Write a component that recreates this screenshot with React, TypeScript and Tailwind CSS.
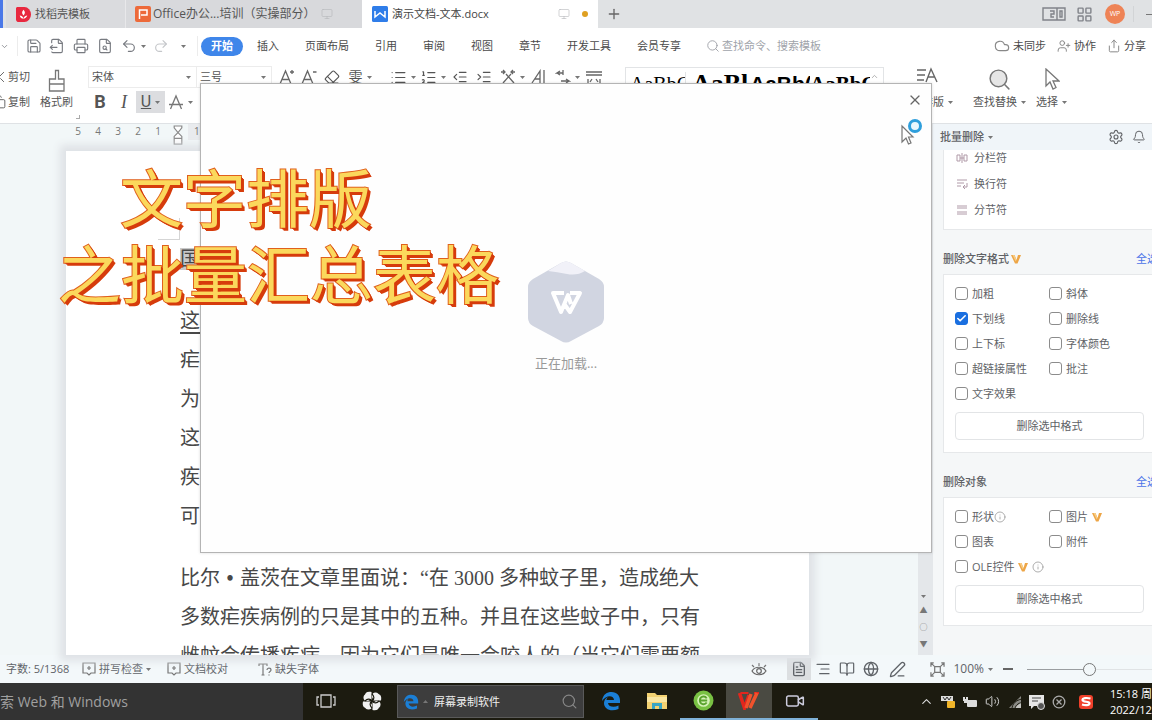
import type { ReactNode } from "react";
import {
  Bell, BookOpen, Check, ChevronDown, ChevronUp, Cloud, Copy, Eraser, FileOutput, FileSearch, FileText, Globe,
  IndentDecrease, IndentIncrease, Info, LayoutGrid, List, ListOrdered, Monitor, PenLine, Plus, Printer, Redo2,
  Save, Scissors, Search, Settings, Share, TextAlignEnd, Undo2, UserPlus, Video, Volume2, X,
} from "lucide-react";

const line = { size: 16, strokeWidth: 1.7 };

function Caret() {
  return (
    <svg viewBox="0 0 5 3" className="h-[3px] w-[5px] shrink-0" fill="#777">
      <path d="M0 0h5L2.500 3z" />
    </svg>
  );
}

function Tool({ label, width, children, caret }: { label: string; width: string; children: ReactNode; caret?: boolean }) {
  return (
    <button aria-label={label} className={`flex h-[22px] shrink-0 items-center justify-center gap-1 ${width}`}>
      {children}
      {caret && <Caret />}
    </button>
  );
}

function VipMark() {
  return (
    <svg viewBox="0 0 10 10" className="size-[10px] shrink-0">
      <path d="M0 1h3.500l2 5 1.500-5H10L6.500 9.500H4z" fill="#eda546" />
      <path d="M3.500 1l2 5-.8 1.500L1.500 1z" fill="#f8cd84" />
    </svg>
  );
}

function TitleBar() {
  return (
    <header className="flex h-7 shrink-0 items-stretch bg-[#e0e2e4] text-[#555]">
      <div className="w-[3px] bg-[#4a78e8]" />
      <nav className="flex flex-1 items-stretch">
        <button className="ml-[3px] flex w-[119px] items-center gap-1 bg-[#dadbde] pl-2.5">
          <svg viewBox="0 0 16 16" className="size-[15px]">
            <path d="M1 0h8a7 8 0 0 1 0 16H3a3 3 0 0 1-3-3V1z" fill="#e8283f" />
            <path d="M4 9c2 0 3 1 4 3 1-2 2-3 4-3-1 4-7 5-8 0zM8 3c2 2 2 4 0 6-2-2-2-4 0-6z" fill="#fff" />
          </svg>
          找稻壳模板
        </button>
        <button className="flex w-[237px] items-center gap-0.5 border-l border-[#e8e8ea] bg-[#d8d9dc] pl-[9px] text-left">
          <svg viewBox="0 0 16 16" className="size-4 shrink-0">
            <rect width="16" height="16" rx="2" fill="#ed6a3a" />
            <path d="M4.500 13V4h7.500v5H6" fill="none" stroke="#fff" strokeWidth="1.500" />
          </svg>
          <span className="w-[166px] text-[12px] whitespace-nowrap">Office办公...培训（实操部分）</span>
          <Monitor size={12} strokeWidth={1.2} color="#b5b7ba" />
        </button>
        <button className="flex w-[236px] items-center gap-1 bg-white pl-2.5 text-left text-[#444]">
          <svg viewBox="0 0 16 16" className="size-4 shrink-0">
            <rect width="16" height="16" rx="1.500" fill="#2f7de9" />
            <path d="M3 5v6l5-4 5 4V5" fill="none" stroke="#fff" strokeWidth="1.500" />
          </svg>
          <span className="w-[162px]">演示文档-文本.docx</span>
          <Monitor size={12} strokeWidth={1.2} color="#b5b7ba" />
          <span className="ml-2 size-1.5 rounded-full bg-[#dfa022]" />
        </button>
        <button aria-label="新建标签" className="ml-2"><Plus size={16} strokeWidth={2} color="#666" /></button>
      </nav>
      <div className="flex items-center">
        <button aria-label="阅读模式" className="mr-2.5">
          <svg viewBox="0 0 24 14" className="h-3.5 w-6" fill="none" stroke="#808389" strokeWidth="1.400">
            <path d="M1 1h14v12H1zM15 1h8v12h-8zM8 4h4v3H9v3h3M18 4v6h2V4z" />
          </svg>
        </button>
        <button aria-label="应用"><LayoutGrid size={17} strokeWidth={2} color="#808389" /></button>
        <span className="ml-3 flex size-5 items-center justify-center rounded-full bg-[#ee8356] text-[7px] text-white">WP</span>
        <span className="ml-2 h-4 w-px bg-[#d2d4d6]" />
        <button aria-label="最小化" className="ml-3 h-px w-1.5 bg-[#777]" />
      </div>
    </header>
  );
}

const menuTabs = ["插入", "页面布局", "引用", "审阅", "视图", "章节", "开发工具", "会员专享"];

function MenuBar() {
  return (
    <div className="flex h-9 shrink-0 items-center bg-white text-[#4a4a4a]">
      <div className="flex w-[201px] shrink-0 items-center text-[#777a80]">
        <ChevronDown size={9} />
        <span className="mr-1 ml-2 h-5 w-px bg-[#ececec]" />
        <Tool label="保存" width="w-[23px]"><Save {...line} /></Tool>
        <Tool label="输出" width="w-6"><FileOutput {...line} /></Tool>
        <Tool label="打印" width="w-6"><Printer {...line} /></Tool>
        <Tool label="打印预览" width="w-6"><FileSearch {...line} /></Tool>
        <Tool label="撤销" width="w-8" caret><Undo2 {...line} /></Tool>
        <Tool label="重做" width="w-6"><Redo2 {...line} color="#c4c6c9" /></Tool>
        <Tool label="更多" width="w-5"><Caret /></Tool>
        <span className="ml-1 h-5 w-px bg-[#ececec]" />
      </div>
      <button className="h-[19px] w-[42px] rounded-full bg-[#3f86ea] font-bold text-white">开始</button>
      <nav className="ml-3.5 flex gap-[26px] whitespace-nowrap">
        {menuTabs.map((t) => <button key={t}>{t}</button>)}
      </nav>
      <label className="ml-[25px] flex items-center gap-0.5">
        <Search size={14} strokeWidth={1.5} color="#9a9da3" />
        <input aria-label="搜索" placeholder="查找命令、搜索模板" className="w-[120px] bg-transparent outline-none placeholder:text-[#a0a3aa]" />
      </label>
      <div className="ml-auto flex items-center gap-[3px] pr-1.5 whitespace-nowrap">
        <button className="flex items-center gap-[3px]"><Cloud {...line} color="#888" />未同步</button>
        <button className="ml-2 flex items-center gap-[3px]"><UserPlus {...line} size={14} color="#888" />协作</button>
        <button className="ml-2 flex items-center gap-[3px]"><Share {...line} size={14} color="#888" />分享</button>
      </div>
    </div>
  );
}

function BigTool({ label, icon, caret }: { label: string; icon: ReactNode; caret?: boolean }) {
  return (
    <button className="flex shrink-0 flex-col items-center gap-px">
      <span className="flex h-[26px] items-center">{icon}</span>
      <span className="flex h-[18px] items-center gap-1 whitespace-nowrap">{label}{caret && <Caret />}</span>
    </button>
  );
}

function Ribbon() {
  return (
    <div className="flex h-[60px] shrink-0 overflow-hidden border-b border-[#dfe2e5] bg-white pt-0.5 text-[#555]">
      <div className="-ml-2 flex w-[46px] shrink-0 flex-col gap-[3px]">
        <button className="flex h-[22px] items-center gap-0.5 whitespace-nowrap"><Scissors size={14} strokeWidth={1.5} />剪切</button>
        <button className="flex h-[22px] items-center gap-0.5 whitespace-nowrap"><Copy size={14} strokeWidth={1.5} />复制</button>
      </div>
      <div className="relative w-[50px] shrink-0 pl-0.5">
        <BigTool label="格式刷" icon={
          <svg viewBox="0 0 20 24" className="mt-1 h-6 w-5" fill="none" stroke="#777" strokeWidth="1.300">
            <path d="M8.500 1.500h3V10h5.500v12H2.500V10h6zM2.500 15h14.500" />
          </svg>
        } />
        <span className="absolute right-2 bottom-1 size-1 border-r border-b border-[#aaa]" />
      </div>
      <div className="flex shrink-0 flex-col gap-[3px]">
        <div className="flex items-center">
          <div className="flex h-[22px] w-[109px] items-center border border-[#ececec] pr-[5px]">
            <select aria-label="字体" className="w-full appearance-none bg-transparent pl-[3px] outline-none"><option>宋体</option></select>
            <Caret />
          </div>
          <div className="flex h-[22px] w-[75px] items-center border border-l-0 border-[#ececec] pr-[5px]">
            <select aria-label="字号" className="w-full appearance-none bg-transparent pl-[3px] outline-none"><option>三号</option></select>
            <Caret />
          </div>
          <div className="flex pl-1">
            <Tool label="增大字号" width="w-[22px]">
              <svg viewBox="0 0 16 16" className="size-4" fill="none" stroke="#666" strokeWidth="1.300"><path d="M1 15L6.500 2 12 15M3 10.500h7M11 3h4M13 1v4" /></svg>
            </Tool>
            <Tool label="减小字号" width="w-[22px]">
              <svg viewBox="0 0 16 16" className="size-4" fill="none" stroke="#666" strokeWidth="1.300"><path d="M1 15L6.500 2 12 15M3 10.500h7M12 3h3.500" /></svg>
            </Tool>
            <Tool label="清除格式" width="w-6"><Eraser {...line} /></Tool>
            <Tool label="拼音指南" width="w-8" caret><span className="text-[14px]">雯</span></Tool>
            <Tool label="项目符号" width="w-[30px] ml-3" caret><List {...line} size={17} /></Tool>
            <Tool label="编号" width="w-[30px]" caret><ListOrdered {...line} size={17} /></Tool>
            <Tool label="减少缩进" width="w-6"><IndentDecrease {...line} /></Tool>
            <Tool label="增加缩进" width="w-6"><IndentIncrease {...line} /></Tool>
            <Tool label="中文版式" width="w-8" caret>
              <svg viewBox="0 0 16 16" className="size-4" fill="none" stroke="#666" strokeWidth="1.300">
                <path d="M1 3h4M3 1l2 2-2 2M15 3h-4M13 1l-2 2 2 2M3 14L11 5M6 5l8 9" />
              </svg>
            </Tool>
            <Tool label="文字方向" width="w-[22px]">
              <svg viewBox="0 0 16 16" className="size-4" fill="none" stroke="#666" strokeWidth="1.300"><path d="M1 14L9 2v12M4 10h5M13 1v14" /></svg>
            </Tool>
            <Tool label="制表位" width="w-[30px] ml-0.5" caret>
              <svg viewBox="0 0 16 16" className="size-4" fill="none" stroke="#666" strokeWidth="1.300"><path d="M8 4H2l3-2M2 4l3 2M8 1v5M6 12h8l-3-2M14 12l-3 2" /></svg>
            </Tool>
            <Tool label="行距" width="w-6">
              <svg viewBox="0 0 18 16" className="h-4 w-[18px]" fill="none" stroke="#666" strokeWidth="1.300"><path d="M1 3h16M1 6h16M3 10v5M15 10v5M7 10l-2 3M11 10l2 3" /></svg>
            </Tool>
          </div>
        </div>
        <div className="flex items-center">
          <Tool label="加粗" width="w-6"><span className="font-[Roboto] text-[18px] font-bold">B</span></Tool>
          <Tool label="倾斜" width="w-6"><span className="font-['Liberation_Serif'] text-[18px] italic">I</span></Tool>
          <Tool label="下划线" width="w-[29px] bg-[#dcdde0]" caret><span className="font-[Roboto] text-[16px] underline">U</span></Tool>
          <Tool label="删除线" width="w-[31px]" caret>
            <svg viewBox="0 0 16 16" className="size-4" fill="none" stroke="#777" strokeWidth="1.300"><path d="M2.500 15L8 2l5.500 13M1 10.500h14" /></svg>
          </Tool>
        </div>
      </div>
      <div className="mt-px ml-[19px] flex h-9 shrink-0 items-start border border-[#e2e4e6] pt-1 text-black">
        <span className="h-8 w-[60px] overflow-hidden border-r border-[#e2e4e6] pl-1 font-['Liberation_Serif'] text-[20px] leading-6">AaBbC</span>
        <span className="h-8 w-16 overflow-hidden pl-1.5 font-['Liberation_Serif'] text-[26px] leading-6 font-bold">AaBl</span>
        <span className="h-8 w-[60px] overflow-hidden font-['Liberation_Sans'] text-[21px] leading-6 font-bold">AaBb(</span>
        <span className="h-8 w-[60px] overflow-hidden font-['Liberation_Serif'] text-[21px] leading-6 font-bold">AaBbC</span>
        <ChevronUp size={9} color="#999" className="mr-1" />
      </div>
      <div className="ml-auto flex pr-[85px]">
        <BigTool label="文字排版" caret icon={
          <svg viewBox="0 0 22 20" className="mb-1 h-5 w-[22px]" fill="none" stroke="#666" strokeWidth="1.400">
            <path d="M1 3h9M1 8h8M1 13h7M10 15L15 2l6 13M12 10h7" />
          </svg>
        } />
        <div className="w-5" />
        <BigTool label="查找替换" caret icon={<Search size={25} strokeWidth={1.4} fill="#e6e6e6" color="#777" />} />
        <div className="w-2.5" />
        <BigTool label="选择" caret icon={
          <svg viewBox="0 0 16 22" className="h-[22px] w-4" fill="#fff" stroke="#777" strokeWidth="1.300"><path d="M2 1v17l4-4 3 7 3-1.500-3-6.500h6z" /></svg>
        } />
      </div>
    </div>
  );
}

function Ruler() {
  return (
    <div className="flex h-[27px] shrink-0 pl-[68px] text-[10px] leading-[15px] text-[#777]">
      {["5", "4", "3", "2", "1"].map((n) => <span key={n} className="w-5 text-center">{n}</span>)}
      <svg viewBox="0 0 12 22" className="mt-px h-[21px] w-5" fill="#fff" stroke="#888" strokeWidth="1.200">
        <path d="M2 1h8v2L6 8 2 3zM6 8l4 4v8H2v-8zM2 14h8" />
      </svg>
      <span className="h-4 flex-1 bg-[#e9ebee] pl-1.5">1</span>
    </div>
  );
}

const openingLines = ["疟", "为", "这", "疾", "可"];

function Editor() {
  return (
    <main className="flex min-w-0 flex-1 bg-[#f2f7f8]">
      <div className="flex min-w-0 flex-1 flex-col">
        <Ruler />
        <article className="relative mr-[109px] ml-[66px] flex-1 overflow-hidden bg-white pt-[89px] pl-[114px] font-['Liberation_Serif','Noto_Sans_CJK_SC',serif] text-[20px] leading-[39px] whitespace-nowrap text-[#484848] shadow-[0_0_8px_6px_#dfe2e6]">
          <span className="absolute top-[67px] left-[92px] size-[22px] border-r border-b border-[#d5d5d5]" />
          <div className="flex flex-col gap-[23px]">
            <h1><span className="bg-[#c9c9c9]">国</span></h1>
            <div>
              <p><u className="underline-offset-4">这</u></p>
              {openingLines.map((t) => <p key={t}>{t}</p>)}
            </div>
            <div>
              <p>比尔<span className="inline-block w-5 text-center font-bold">•</span>盖茨在文章里面说：“在 3000 多种蚊子里，造成绝大</p>
              <p>多数疟疾病例的只是其中的五种。并且在这些蚊子中，只有</p>
              <p>雌蚊会传播疾病，因为它们是唯一会咬人的（当它们需要额</p>
            </div>
          </div>
        </article>
      </div>
      <div className="flex w-[15px] flex-col items-center justify-end gap-[7px] bg-[#e4e7ea] pr-1 pb-1.5 text-[8px] leading-[10px] text-[#777]">
        <Caret />
        <span>▲</span>
        <span>○</span>
        <span>▼</span>
      </div>
    </main>
  );
}

type Option = { text: string; checked?: boolean; vip?: boolean; info?: boolean };

const formatOptions: Option[] = [
  { text: "加粗" }, { text: "斜体" },
  { text: "下划线", checked: true }, { text: "删除线" },
  { text: "上下标" }, { text: "字体颜色" },
  { text: "超链接属性" }, { text: "批注" },
  { text: "文字效果" },
];

const objectOptions: Option[] = [
  { text: "形状", info: true }, { text: "图片", vip: true },
  { text: "图表" }, { text: "附件" },
  { text: "OLE控件", vip: true, info: true },
];

function OptionCard({ title, vip, options }: { title: string; vip?: boolean; options: Option[] }) {
  return (
    <section>
      <div className="flex h-11 items-center gap-0.5 pt-3.5">
        <h2 className="font-medium">{title}</h2>
        {vip && <VipMark />}
        <button className="-mr-0.5 ml-auto text-[#4a73e8]">全选</button>
      </div>
      <div className="border border-[#e6e8ea] bg-white px-[11px] pt-1.5 pb-3">
        <div className="grid grid-cols-[94px_1fr]">
          {options.map((o) => (
            <label key={o.text} className="flex h-[25px] items-center gap-1 whitespace-nowrap">
              <span className="relative size-[13px] shrink-0">
                <input type="checkbox" defaultChecked={o.checked} className="peer block size-[13px] appearance-none rounded-[3px] border border-[#8c8c8c] bg-white checked:border-[#1a6fe0] checked:bg-[#1a6fe0]" />
                <Check size={11} strokeWidth={3.5} color="#fff" className="pointer-events-none absolute top-px left-px hidden peer-checked:block" />
              </span>
              {o.text}
              {o.vip && <VipMark />}
              {o.info && <Info size={12} strokeWidth={1.6} color="#999" className={o.vip ? "" : "-ml-1"} />}
            </label>
          ))}
        </div>
        <button className="mt-1.5 h-7 w-full rounded-sm border border-[#e2e4e6] bg-white">删除选中格式</button>
      </div>
    </section>
  );
}

const breakRows = [
  { text: "分栏符", d: "M1 3h3v6H1zM8 3h3v6H8zM6 1v10M4 6h4" },
  { text: "换行符", d: "M1 2h10M1 5h7M1 8h4M11 5v4H7M9 7L7 9l2 2" },
  { text: "分节符", d: "M1 2h10M1 4h10M1 8h10M1 10h10" },
];

function SidePanel() {
  return (
    <aside className="flex w-[219px] shrink-0 flex-col overflow-hidden bg-[#f5f7f8] text-[#606266]">
      <div className="flex h-[26px] shrink-0 items-center bg-[#f0f5f9] pr-1.5 pl-[7px]">
        <button className="flex items-center gap-1 font-medium">批量删除 <Caret /></button>
        <button aria-label="设置" className="ml-auto"><Settings size={16} strokeWidth={1.7} /></button>
        <button aria-label="通知" className="ml-2"><Bell size={14} strokeWidth={1.7} /></button>
      </div>
      <div className="-mr-1 flex-1 overflow-hidden pl-2.5">
        <ul className="-mt-1.5 border border-[#e6e8ea] bg-white pb-1.5 pl-3">
          {breakRows.map((r) => (
            <li key={r.text} className="flex h-[26px] items-center gap-1.5">
              <svg viewBox="0 0 12 12" className="size-3" fill="none" stroke="#b09aa8"><path d={r.d} /></svg>
              {r.text}
            </li>
          ))}
        </ul>
        <OptionCard title="删除文字格式" vip options={formatOptions} />
        <OptionCard title="删除对象" options={objectOptions} />
      </div>
    </aside>
  );
}

function BadgeIcon() {
  return (
    <svg viewBox="0 0 14 14" className="size-3.5" fill="none" stroke="#777" strokeWidth="1.200">
      <path d="M1 1h12v10H9l-2 2-2-2H1z" /><path d="M7 4v4M5 6h4" />
    </svg>
  );
}

function StatusBar() {
  return (
    <footer className="flex h-7 shrink-0 items-center bg-[#f3f8fa] pl-1.5 whitespace-nowrap text-[#5f6368]">
      <span className="w-[76px]">字数: 5/1368</span>
      <button className="flex w-[85px] items-center gap-[3px]"><BadgeIcon />拼写检查 <Caret /></button>
      <button className="flex w-[91px] items-center gap-[3px]"><BadgeIcon />文档校对</button>
      <button className="flex items-center gap-0.5">
        <svg viewBox="0 0 15 13" className="h-[13px] w-[15px]" fill="none" stroke="#777" strokeWidth="1.200">
          <path d="M1 3V1h8v2M5 1v11M3.500 12h3M9 7c0-2.500 4-2.500 4 0 0 1.500-2 1.500-2 3M11 11.500v1" />
        </svg>
        缺失字体
      </button>
      <div className="ml-auto flex items-center">
        <Tool label="护眼模式" width="w-8 mr-3">
          <svg viewBox="0 0 16 16" className="size-4" fill="none" stroke="#666" strokeWidth="1.200">
            <path d="M1 10c3-5 11-5 14 0-3 5-11 5-14 0zM3 6L1 4M8 5V2M13 6l2-2" /><circle cx="8" cy="10" r="2.300" />
          </svg>
        </Tool>
        <Tool label="页面视图" width="w-6 bg-[#dcdfe1]"><FileText size={16} strokeWidth={2} /></Tool>
        <Tool label="大纲" width="w-6"><TextAlignEnd size={16} strokeWidth={1.8} /></Tool>
        <Tool label="阅读版式" width="w-6"><BookOpen size={16} strokeWidth={1.8} /></Tool>
        <Tool label="Web版式" width="w-6"><Globe size={16} strokeWidth={2} /></Tool>
        <Tool label="写作模式" width="w-7"><PenLine size={17} strokeWidth={1.8} /></Tool>
        <Tool label="适应页面" width="w-6 ml-3.5">
          <svg viewBox="0 0 16 16" className="size-[15px]" fill="none" stroke="#777" strokeWidth="1.300">
            <path d="M5 5h6v6H5zM1 5V1h3M1 1l4 4M12 1h3v4M15 1l-4 4M1 11v4h3M1 15l4-4M12 15h3v-4M15 15l-4-4" />
          </svg>
        </Tool>
        <button className="ml-1 flex items-center gap-1 text-[12px]">100% <Caret /></button>
        <button aria-label="缩小" className="mx-2.5 h-0.5 w-2.5 bg-[#666]" />
        <input
          type="range" aria-label="缩放" min={0} max={100} defaultValue={50}
          className="ml-1 h-3 w-[125px] appearance-none bg-[linear-gradient(90deg,#9a9da0_50%,#e0e3e5_50%)] bg-[length:100%_1px] bg-center bg-no-repeat [&::-webkit-slider-thumb]:size-[13px] [&::-webkit-slider-thumb]:appearance-none [&::-webkit-slider-thumb]:rounded-full [&::-webkit-slider-thumb]:border [&::-webkit-slider-thumb]:border-[#777] [&::-webkit-slider-thumb]:bg-[#f3f8fa]"
        />
      </div>
    </footer>
  );
}

function TaskButton({ label, active, open, children }: { label: string; active?: boolean; open?: boolean; children: ReactNode }) {
  return (
    <button
      aria-label={label}
      className={`flex w-[46px] items-center justify-center border-b-2 ${active ? "bg-[#4a4a42]" : ""} ${open ? "border-[#7fb2d8]" : "border-transparent"}`}
    >
      {children}
    </button>
  );
}

function EdgeE({ size }: { size: string }) {
  return (
    <svg viewBox="0 0 20 20" className={size}>
      <path d="M1 10C2 3 6 1 10.500 1 16 1 19 5 19 9.500V12H7c.5 4 6 5 10.500 2.500V18C10 21 3 18.500 3 12c0-3 2-5 4-6-1 1-1.500 2-1.600 3H13c0-5-8-5.500-12 1z" fill="#1b7fd6" />
    </svg>
  );
}

function Taskbar() {
  return (
    <div className="flex h-[37px] shrink-0 items-stretch overflow-hidden bg-[#1c1b10] text-[#ddd]">
      <button className="flex w-[303px] shrink-0 items-center bg-[#333333] text-left text-[14px] whitespace-nowrap text-[#a0a0a0]">
        <span className="-ml-3.5">搜索 Web 和 Windows</span>
      </button>
      <TaskButton label="任务视图">
        <svg viewBox="0 0 20 14" className="h-3.5 w-5" fill="none" stroke="#ccc" strokeWidth="1.300"><path d="M5 1h10v12H5zM3 3H1v8h2M17 3h2v8h-2" /></svg>
      </TaskButton>
      <TaskButton label="小程序">
        <svg viewBox="0 0 20 20" className="size-5" fill="#f1f1f1">
          <path d="M9.500 9V1C5 0 3 2 3 4.500zM11 9.500h8c1-4.500-1-6.500-3.500-6.500zM10.500 11v8c4.500 1 6.500-1 6.500-3.500zM9 10.500H1c-1 4.500 1 6.500 3.500 6.500z" />
          <circle cx="5" cy="6.500" r="3.500" /><circle cx="13.500" cy="5" r="3.500" /><circle cx="15" cy="13.500" r="3.500" /><circle cx="6.500" cy="15" r="3.500" />
          <path d="M10 10c-2-3-5-2-7 0M10 10c3-2 2-5 0-7M10 10c2 3 5 2 7 0M10 10c-3 2-2 5 0 7" stroke="#1c1b10" strokeWidth="1.200" fill="none" />
        </svg>
      </TaskButton>
      <div className="my-0.5 ml-0.5 flex w-[187px] items-center border border-[#5a5a5a] bg-[#3d3d3d] px-[5px]">
        <EdgeE size="size-4" />
        <span className="mx-1 rotate-180"><Caret /></span>
        <input aria-label="网页搜索" defaultValue="屏幕录制软件" className="ml-0.5 w-0 flex-1 bg-transparent text-[#eee] outline-none" />
        <Search size={17} strokeWidth={1.6} color="#888" />
      </div>
      <div className="ml-1 flex">
        <TaskButton label="Edge"><EdgeE size="size-5" /></TaskButton>
        <TaskButton label="文件资源管理器">
          <svg viewBox="0 0 22 18" className="h-[18px] w-[22px]">
            <path d="M1 1h8l2 2h10v14H1z" fill="#f3d272" /><path d="M1 5h20v5H1z" fill="#fbe7a2" /><path d="M6 17v-6h10v6h-3v-3H9v3z" fill="#3aa6c4" />
          </svg>
        </TaskButton>
        <TaskButton label="浏览器" open>
          <svg viewBox="0 0 20 20" className="size-[21px]">
            <circle cx="10" cy="10" r="9.500" fill="#79c143" /><circle cx="10" cy="10" r="6" fill="#d6f2b8" /><path d="M6.500 10h7M13 8c-2-3.500-6.500-1.500-6.500 2s4.500 5 6.500 2" fill="none" stroke="#5aa32e" strokeWidth="1.800" />
          </svg>
        </TaskButton>
        <TaskButton label="WPS" active open>
          <svg viewBox="0 0 22 18" className="h-[18px] w-[22px]" fill="none" strokeWidth="3.500">
            <path d="M1.500 1l5 15L11 3" stroke="#e3261d" /><path d="M10.500 1h-8M21 1h-5" stroke="#e3261d" strokeWidth="2" /><path d="M8 16l5-14M12 16l7-15" stroke="#f0522c" />
          </svg>
        </TaskButton>
        <TaskButton label="录屏" open><Video size={20} strokeWidth={1.8} color="#ccd" /></TaskButton>
      </div>
      <div className="ml-auto flex shrink-0 items-center">
        <Tool label="显示隐藏的图标" width="w-[22px]"><ChevronUp size={15} strokeWidth={1.8} /></Tool>
        <Tool label="安全" width="w-[22px]">
          <svg viewBox="0 0 16 14" className="h-3.5 w-4"><path d="M1 1h12v5H1z" fill="#ddd" /><path d="M3 2l2 3 2-3 2 3 2-3" stroke="#333" fill="none" /><rect x="7" y="6" width="8" height="7" rx="1" fill="#f0b429" /></svg>
        </Tool>
        <Tool label="电源" width="w-[22px]">
          <svg viewBox="0 0 16 12" className="h-3 w-4" fill="#ddd"><path d="M1 1h2v2h1V1h2v4H5v2H2V5H1z" /><rect x="5" y="4" width="10" height="7" rx="1" /></svg>
        </Tool>
        <Tool label="音量" width="w-[22px]"><Volume2 size={15} strokeWidth={1.5} /></Tool>
        <Tool label="网络" width="w-[23px]">
          <svg viewBox="0 0 14 14" className="size-3.5" fill="#8a8a84"><path d="M1 13L13 1v12z" /><path d="M7 13l6-6v6z" fill="#c4c4c0" /><path d="M4 14C4 9 8 5 14 4M7 14c0-3 3-6 7-6.500" fill="none" stroke="#1c1b10" /></svg>
        </Tool>
        <Tool label="通知" width="w-[22px]">
          <svg viewBox="0 0 16 16" className="size-4"><path d="M0 1h15v11H5l-3 3v-3H0z" fill="#e6e6e6" /><path d="M3 4h9M3 7h6" stroke="#444" /><circle cx="12" cy="12" r="3.500" fill="#555" stroke="#ddd" /></svg>
        </Tool>
        <Tool label="状态" width="w-[22px]">
          <svg viewBox="0 0 14 14" className="size-3.5" fill="none" stroke="#aaa" strokeWidth="1.300"><circle cx="7" cy="7" r="5.800" /><path d="M4.500 4.500l5 5M9.500 4.500l-5 5" /></svg>
        </Tool>
        <Tool label="输入法" width="w-8">
          <svg viewBox="0 0 16 16" className="size-4"><rect x="1" y="1" width="14" height="14" rx="3" fill="#f0402a" /><path d="M12.500 4.500c-4-1-8-.5-8 1.500 0 2.500 7.500 1 7 3.500-.3 2-4.500 2-7.500 1" fill="none" stroke="#fff" strokeWidth="2.200" /></svg>
        </Tool>
        <time className="ml-2 w-[42px] overflow-hidden text-[11px] leading-[16px] whitespace-nowrap text-white">15:18 周<br />2022/12/</time>
      </div>
    </div>
  );
}

function LoadingDialog() {
  return (
    <div role="dialog" aria-label="正在加载" className="absolute top-[83px] right-[220px] left-[200px] flex h-[470px] flex-col items-center border border-[#b4b4b4] bg-[#fefefe] shadow-[0_0_3px_#0002]">
      <div className="flex w-full justify-end pt-2 pr-2">
        <button aria-label="关闭"><X size={16} strokeWidth={1.8} color="#666" /></button>
      </div>
      <svg viewBox="0 0 76 82" className="mt-[153px] h-[82px] w-[76px]">
        <path d="M33 2q5-3 10 0l28 16q5 3 5 8v31q0 5-5 8L43 80q-5 3-10 0L5 65q-5-3-5-8V26q0-5 5-8z" fill="#d1d5e1" />
        <path d="M20 10L33 2q5-3 10 0l14 8q-8 5-18 3t-19-3z" fill="#f1f1f8" />
        <path d="M36 32H25l8 19 7-17 3 9M37 44l5 7 10-19H42" fill="none" stroke="#fff" strokeWidth="4" strokeLinejoin="round" />
      </svg>
      <p className="mt-2.5 text-[13px] leading-5 text-[#999]">正在加载...</p>
      <div className="absolute top-[34px] right-2 h-7 w-6">
        <svg viewBox="0 0 24 28" className="h-7 w-6">
          <path d="M3 8v16l4-4 2.500 6 2.500-1-2.500-6H14z" fill="#fff" stroke="#777" strokeWidth="1.200" />
          <circle cx="16" cy="8" r="5.500" fill="#e9f7fd" stroke="#2f9fdc" strokeWidth="3" />
        </svg>
      </div>
    </div>
  );
}

export default function App() {
  return (
    <div className="relative flex h-screen flex-col overflow-hidden bg-white font-['Open_Sans','Noto_Sans_CJK_SC',sans-serif] text-[11px] leading-4">
      <TitleBar />
      <MenuBar />
      <Ribbon />
      <div className="flex min-h-0 flex-1">
        <Editor />
        <SidePanel />
      </div>
      <StatusBar />
      <Taskbar />
      <LoadingDialog />
      <div className="pointer-events-none absolute top-[157px] left-[58px] font-['Noto_Sans_CJK_SC',sans-serif] text-[63px] leading-[76px] font-normal whitespace-nowrap text-[#fbd85c] [paint-order:stroke_fill] [-webkit-text-stroke:2px_#e0601c] [text-shadow:1px_1px_0_#d63c0c,2px_2px_0_#d63c0c,3px_3px_0_#d63c0c]">
        <p className="pl-[62px]">文字排版</p>
        <p>之批量汇总表格</p>
      </div>
    </div>
  );
}
